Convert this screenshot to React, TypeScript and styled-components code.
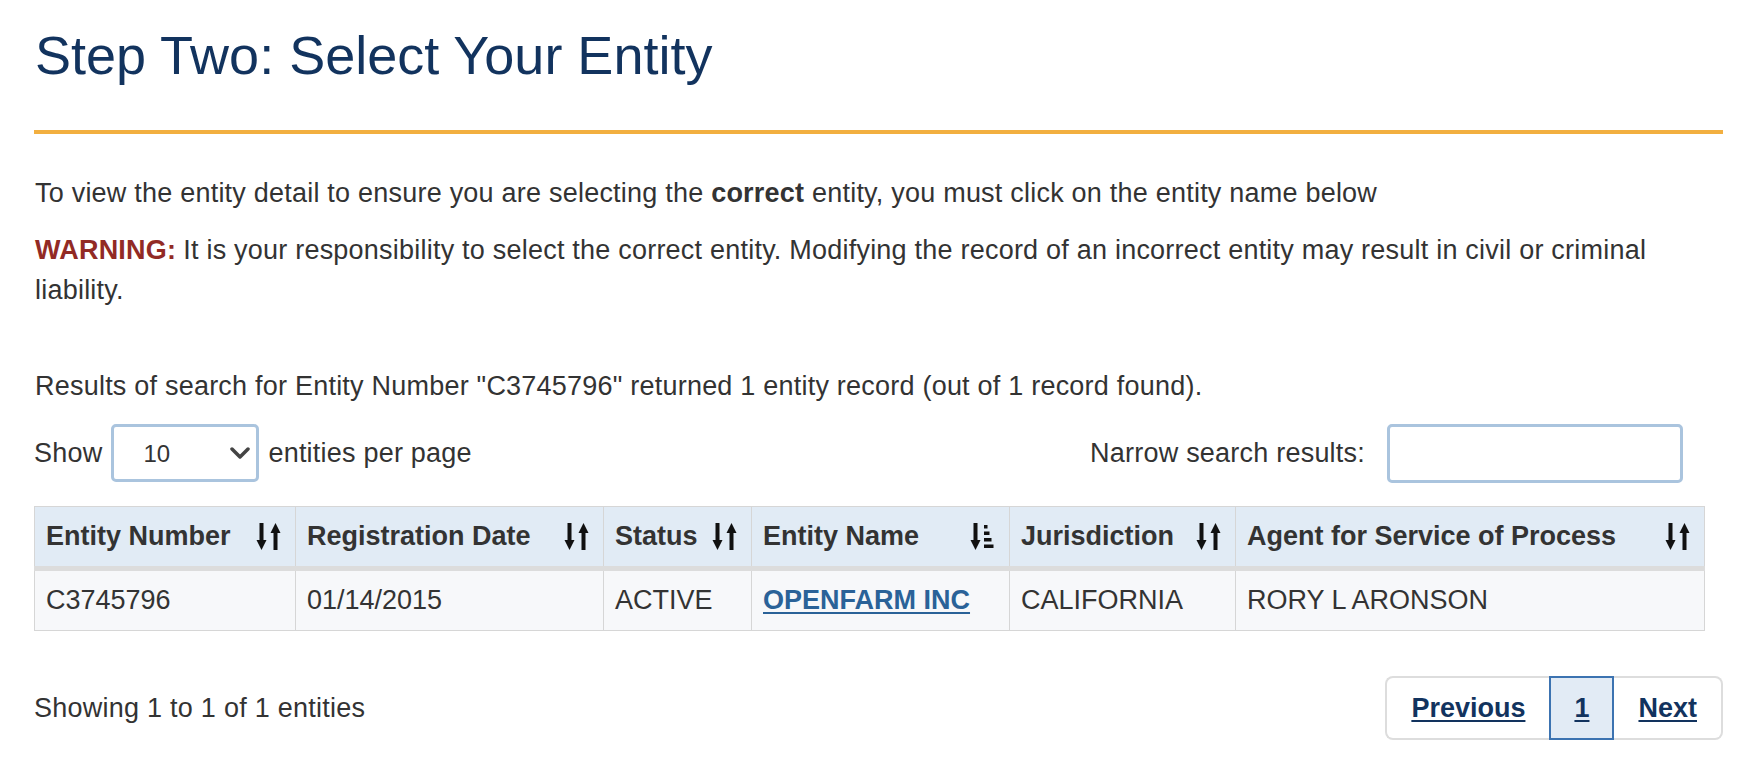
import React from "react";
import styled, { createGlobalStyle } from "styled-components";

const GlobalStyle = createGlobalStyle`
  html, body { margin: 0; padding: 0; background: #ffffff; }
  body {
    font-family: "Liberation Sans", Arial, Helvetica, sans-serif;
    color: #333333;
    font-size: 27px;
    line-height: 1.5;
  }
  * { box-sizing: border-box; }
`;

const Page = styled.main`
  width: 1758px;
  padding: 0 35px 0 34px;
`;

const Title = styled.h1`
  margin: 24px 0 0;
  padding: 0 0 44px 1px;
  font-size: 54px;
  line-height: 62px;
  font-weight: 400;
  color: #12335e;
  border-bottom: 4px solid #f2af40;
`;

const Text = styled.p<{ $mt: number }>`
  margin: ${(p) => p.$mt}px 0 0;
  padding-left: 1px;
  max-width: 1640px;
  letter-spacing: 0.22px;
`;

const Warning = styled.strong`
  color: #922a25;
  font-weight: 700;
  margin-right: 7px;
`;

const Controls = styled.div`
  margin-top: 18px;
  height: 58px;
  display: flex;
  justify-content: space-between;
  align-items: center;
  padding-right: 40px;
  letter-spacing: 0.22px;
`;

const LengthLabel = styled.label`
  display: flex;
  align-items: center;
  gap: 9px;
`;

const SelectWrap = styled.span`
  position: relative;
  display: inline-flex;
`;

const Select = styled.select`
  appearance: none;
  -webkit-appearance: none;
  width: 148px;
  height: 58px;
  border: 3px solid #aac4de;
  border-radius: 5px;
  padding: 0 0 0 29px;
  font: 24px "Liberation Sans", Arial, sans-serif;
  color: #333333;
  background: #ffffff;
  outline: none;
`;

const Chevron = styled.svg`
  position: absolute;
  right: 9px;
  top: 50%;
  transform: translateY(-50%);
  pointer-events: none;
`;

const FilterLabel = styled.label`
  display: flex;
  align-items: center;
  gap: 22px;
`;

const SearchInput = styled.input`
  width: 296px;
  height: 59px;
  border: 3px solid #aac4de;
  border-radius: 5px;
  background: #ffffff;
  outline: none;
`;

const Table = styled.table`
  margin-top: 24px;
  width: 1670px;
  border-collapse: collapse;
  table-layout: fixed;
  border: 1px solid #d3d3d3;
`;

const HeaderCell = styled.th`
  background: #e1ebf5;
  border: 1px solid #d6d6d6;
  border-bottom: 5px solid #dcdcdc;
  padding: 9px 14px 9px 11px;
  text-align: left;
  font-weight: 700;
  color: #333333;
  white-space: nowrap;
`;

const HeaderInner = styled.div`
  display: flex;
  align-items: center;
  justify-content: space-between;
`;

const BodyCell = styled.td`
  background: #f7f8fa;
  border: 1px solid #d6d6d6;
  padding: 9px 11px 10px;
  color: #333333;
  white-space: nowrap;
`;

const EntityLink = styled.a`
  color: #2a6298;
  font-weight: 700;
  text-decoration: underline;
  text-underline-offset: 3px;
`;

const Footer = styled.div`
  margin-top: 45px;
  display: flex;
  justify-content: space-between;
  align-items: center;
`;

const Summary = styled.span`
  letter-spacing: 0.25px;
`;

const Pager = styled.ul`
  display: flex;
  list-style: none;
  margin: 0;
  padding: 0;
`;

const PageItem = styled.li<{ $active?: boolean; $first?: boolean; $last?: boolean }>`
  height: 64px;
  display: flex;
  align-items: center;
  padding: 0 ${(p) => (p.$active ? 23 : 24)}px;
  border-top: 2px solid ${(p) => (p.$active ? "#3c73b1" : "#dddddd")};
  border-bottom: 2px solid ${(p) => (p.$active ? "#3c73b1" : "#dddddd")};
  border-left: ${(p) => (p.$active ? "2px solid #3c73b1" : p.$first ? "2px solid #dddddd" : "none")};
  border-right: ${(p) => (p.$active ? "2px solid #3c73b1" : p.$last ? "2px solid #dddddd" : "none")};
  border-radius: ${(p) => (p.$first ? "8px 0 0 8px" : p.$last ? "0 8px 8px 0" : "0")};
  background: ${(p) => (p.$active ? "#e2ebf5" : "#ffffff")};
`;

const PageLink = styled.a`
  color: #12335e;
  font-weight: 700;
  text-decoration: underline;
  text-underline-offset: 3px;
`;

const SortBoth = () => (
  <svg width="25" height="27" viewBox="0 0 25 27">
    <rect x="3.5" y="0" width="4" height="19" fill="#111" />
    <polygon points="0.5,17 10.5,17 5.5,27" fill="#111" />
    <polygon points="14.5,10 24.5,10 19.5,0" fill="#111" />
    <rect x="17.5" y="8" width="4" height="19" fill="#111" />
  </svg>
);

const SortAmount = () => (
  <svg width="25" height="27" viewBox="0 0 25 27">
    <rect x="3.5" y="0" width="4" height="19" fill="#111" />
    <polygon points="0.5,17 10.5,17 5.5,27" fill="#111" />
    <rect x="14" y="2" width="3.5" height="3.5" fill="#111" />
    <rect x="14" y="8.5" width="5.5" height="3.5" fill="#111" />
    <rect x="14" y="15" width="7.5" height="3.5" fill="#111" />
    <rect x="14" y="21.5" width="9.5" height="3.5" fill="#111" />
  </svg>
);

const columns: { label: string; width: number; amount?: boolean }[] = [
  { label: "Entity Number", width: 261 },
  { label: "Registration Date", width: 308 },
  { label: "Status", width: 148 },
  { label: "Entity Name", width: 258, amount: true },
  { label: "Jurisdiction", width: 226 },
  { label: "Agent for Service of Process", width: 469 },
];

export default function App() {
  return (
    <>
      <GlobalStyle />
      <Page>
        <Title>Step Two: Select Your Entity</Title>
        <Text $mt={39}>
          To view the entity detail to ensure you are selecting the <b>correct</b> entity, you must
          click on the entity name below
        </Text>
        <Text $mt={16}>
          <Warning>WARNING:</Warning>It is your responsibility to select the correct entity.
          Modifying the record of an incorrect entity may result in civil or criminal liability.
        </Text>
        <Text $mt={55}>
          Results of search for Entity Number "C3745796" returned 1 entity record (out of 1 record
          found).
        </Text>
        <Controls>
          <LengthLabel>
            Show
            <SelectWrap>
              <Select defaultValue="10">
                <option value="10">10</option>
                <option value="25">25</option>
                <option value="50">50</option>
                <option value="100">100</option>
              </Select>
              <Chevron width="20" height="12" viewBox="0 0 20 12">
                <polyline
                  points="2,2 10,10 18,2"
                  fill="none"
                  stroke="#444"
                  strokeWidth="3.5"
                  strokeLinecap="round"
                  strokeLinejoin="round"
                />
              </Chevron>
            </SelectWrap>
            entities per page
          </LengthLabel>
          <FilterLabel>
            Narrow search results:
            <SearchInput type="search" />
          </FilterLabel>
        </Controls>
        <Table>
          <colgroup>
            {columns.map((c) => (
              <col key={c.label} style={{ width: c.width }} />
            ))}
          </colgroup>
          <thead>
            <tr>
              {columns.map((c) => (
                <HeaderCell key={c.label}>
                  <HeaderInner>
                    <span>{c.label}</span>
                    {c.amount ? <SortAmount /> : <SortBoth />}
                  </HeaderInner>
                </HeaderCell>
              ))}
            </tr>
          </thead>
          <tbody>
            <tr>
              <BodyCell>C3745796</BodyCell>
              <BodyCell>01/14/2015</BodyCell>
              <BodyCell>ACTIVE</BodyCell>
              <BodyCell>
                <EntityLink href="#">OPENFARM INC</EntityLink>
              </BodyCell>
              <BodyCell>CALIFORNIA</BodyCell>
              <BodyCell>RORY L ARONSON</BodyCell>
            </tr>
          </tbody>
        </Table>
        <Footer>
          <Summary>Showing 1 to 1 of 1 entities</Summary>
          <Pager>
            <PageItem $first>
              <PageLink href="#">Previous</PageLink>
            </PageItem>
            <PageItem $active>
              <PageLink href="#">1</PageLink>
            </PageItem>
            <PageItem $last>
              <PageLink href="#">Next</PageLink>
            </PageItem>
          </Pager>
        </Footer>
      </Page>
    </>
  );
}
